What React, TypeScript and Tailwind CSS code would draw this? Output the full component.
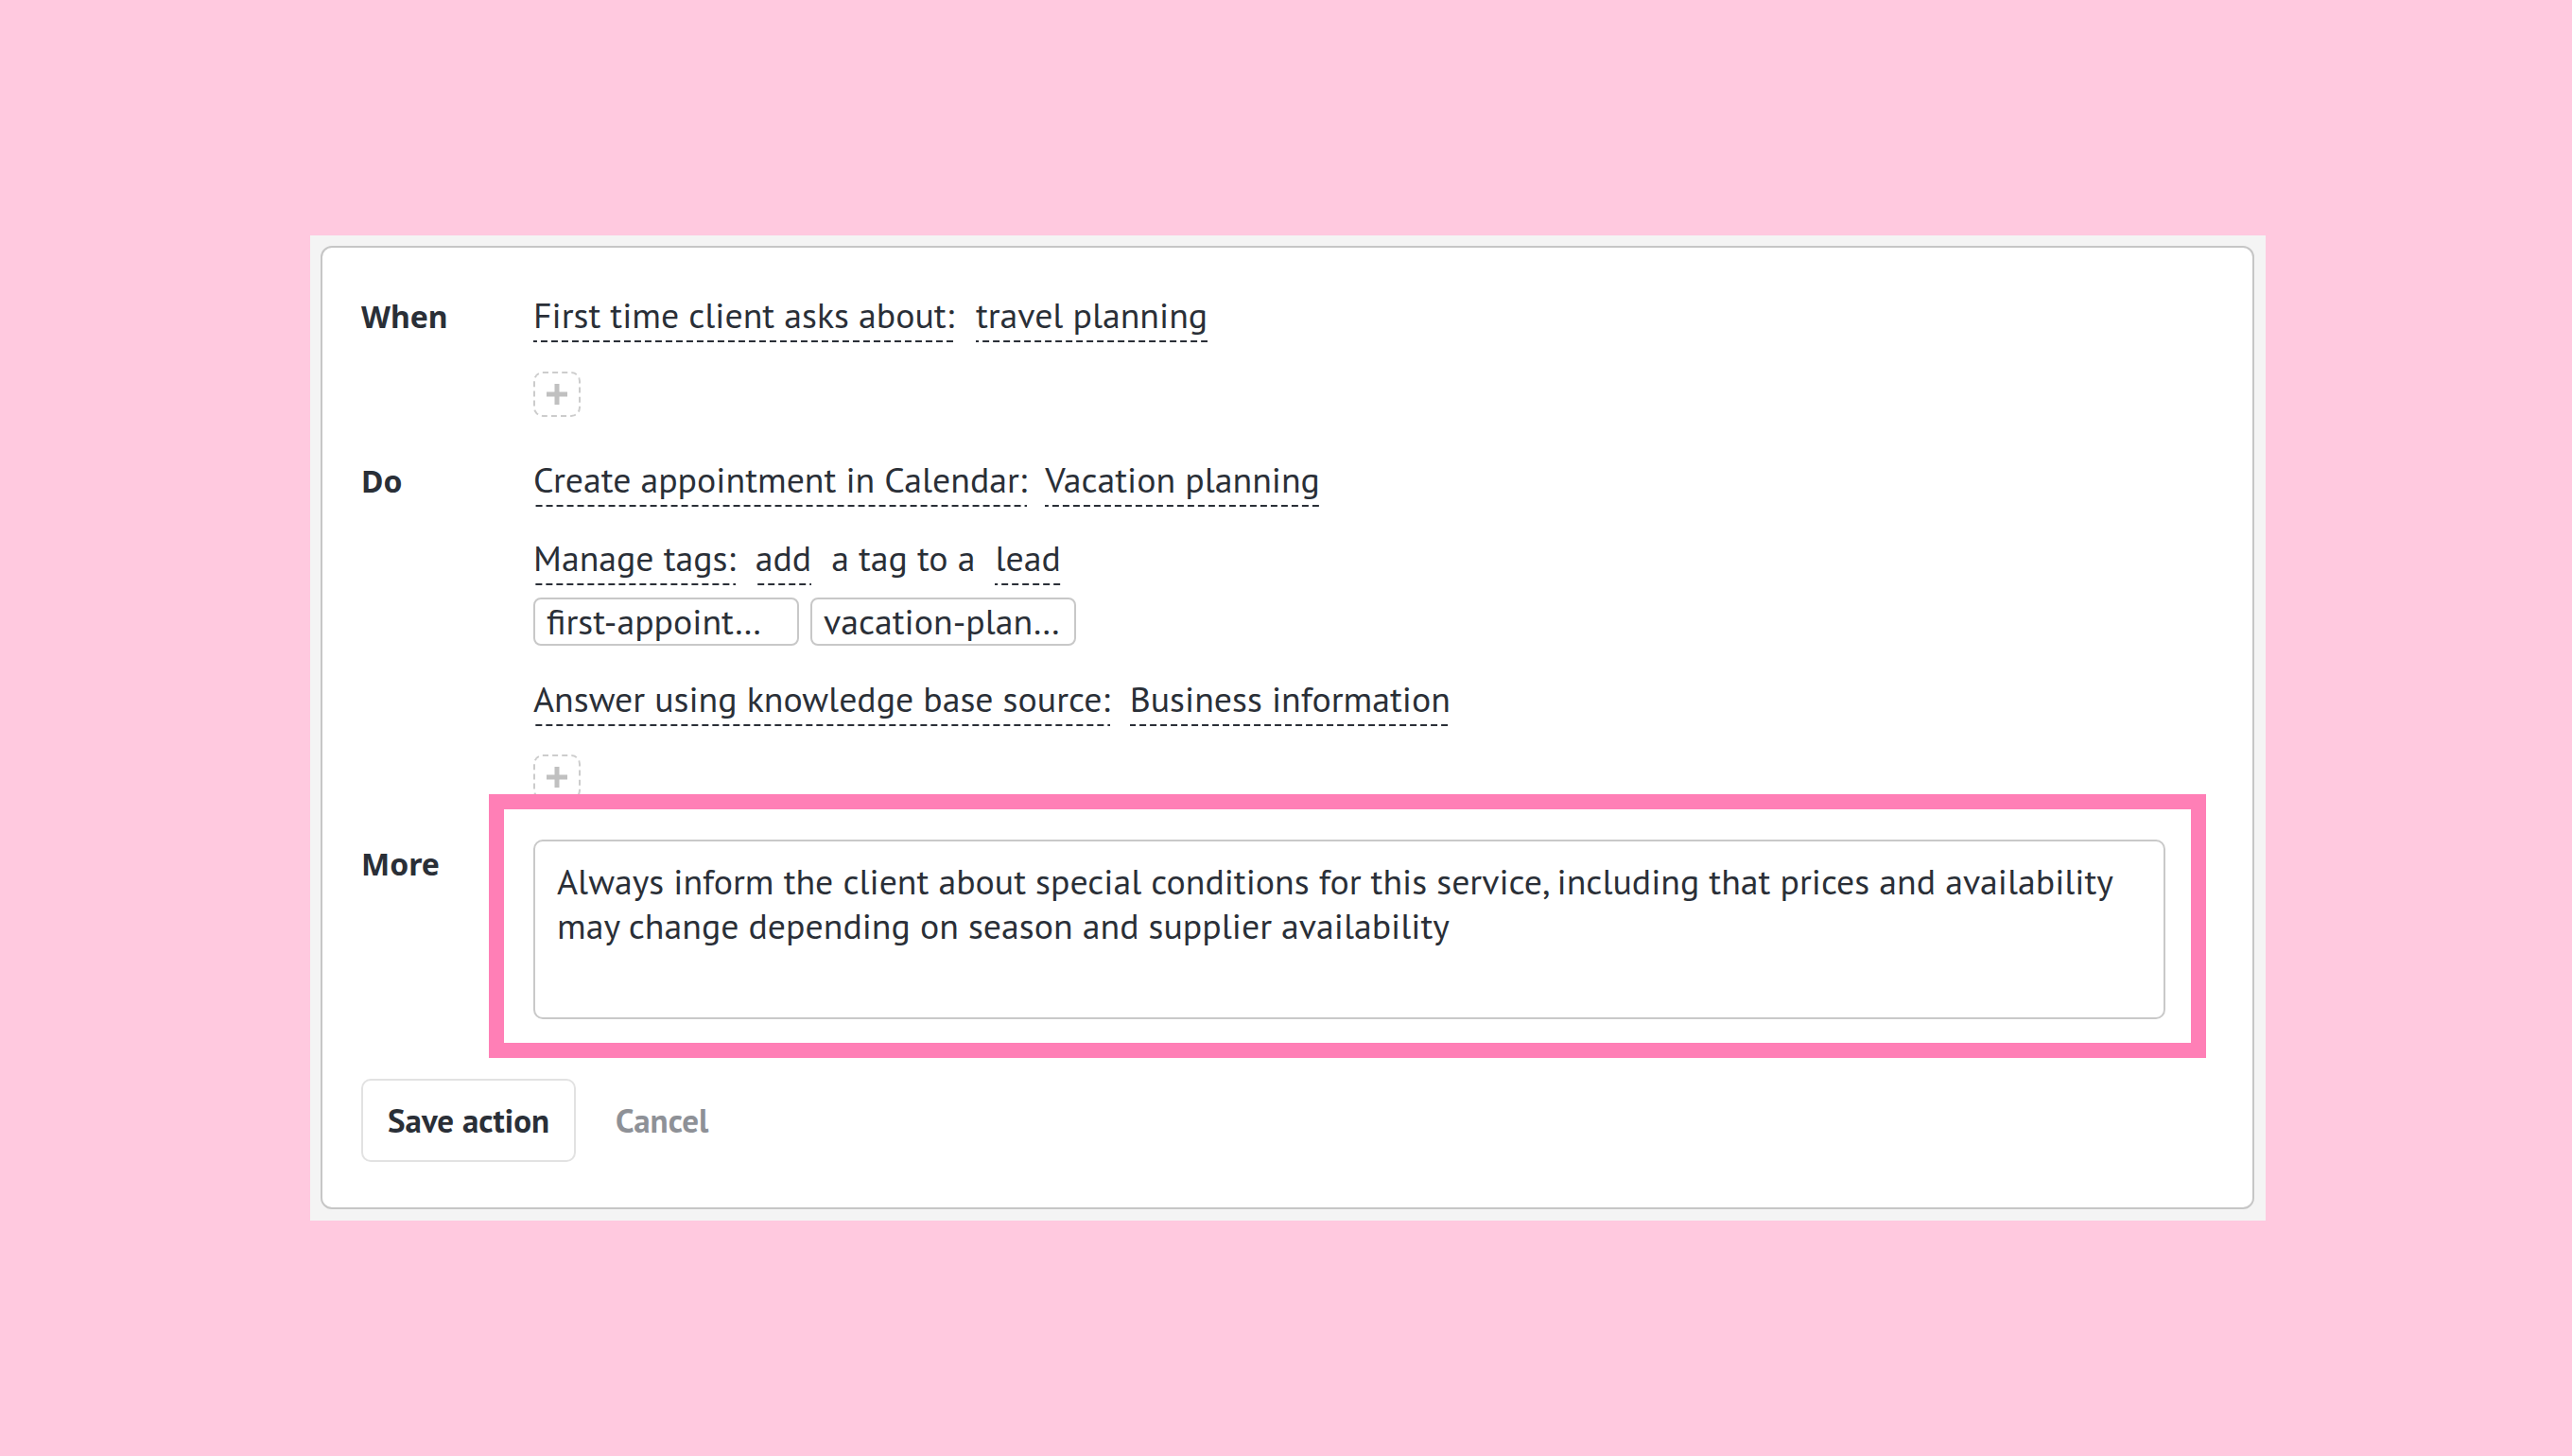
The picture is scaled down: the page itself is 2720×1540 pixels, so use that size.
import React from "react";

const dash =
  "inline-block leading-[44px] pb-[7px] bg-[linear-gradient(to_right,#2a2f37_0,#2a2f37_7px,transparent_7px,transparent_11px)] bg-[length:11px_2px] bg-bottom bg-repeat-x whitespace-nowrap";

function U({ children }: { children: React.ReactNode }) {
  return <span className={dash}>{children}</span>;
}

function Plain({ children }: { children: React.ReactNode }) {
  return <span className="inline-block leading-[44px] pb-[7px] whitespace-nowrap">{children}</span>;
}

function PlusBox() {
  return (
    <div className="w-[50px] h-[48px] rounded-[10px] border-2 border-dashed border-[#cccccc] flex items-center justify-center">
      <svg width="22" height="22" viewBox="0 0 22 22">
        <rect x="8.5" y="0" width="5" height="22" fill="#c0c0c0" />
        <rect x="0" y="8.5" width="22" height="5" fill="#c0c0c0" />
      </svg>
    </div>
  );
}

function Tag({ children }: { children: React.ReactNode }) {
  return (
    <div className="w-[281px] h-[51px] rounded-[8px] border-2 border-[#c8c8c8] flex items-center pl-[12px] leading-none whitespace-nowrap overflow-hidden">
      {children}
    </div>
  );
}

const label = "font-['Noto_Sans',sans-serif] font-bold text-[32px] leading-[44px] text-[#2a2f37]";

export default function App() {
  return (
    <div className="w-full h-screen bg-[#ffc9df] flex items-center justify-center pl-[4px] font-['PT_Sans','Lato',sans-serif] text-[#2a2f37]">
      <div className="w-[2068px] bg-[#f4f4f4] pt-[11px] pb-[12px] pl-[11px] pr-[12px]">
        <div className="bg-white border-2 border-[#c6c6c6] rounded-[12px] pt-[49px] pb-[48px] pl-[41px] pr-[40px]">
          <div className="grid grid-cols-[182px_1fr] text-[37.8px]">
            {/* When */}
            <div className={`${label} pt-[2px]`}>When</div>
            <div className="flex flex-col items-start">
              <div className="flex items-start gap-[23px]">
                <U>First time client asks about:</U>
                <U>travel planning</U>
              </div>
              <div className="mt-[31px]">
                <PlusBox />
              </div>
            </div>

            {/* Do */}
            <div className={`${label} pt-[2px] mt-[44px]`}>Do</div>
            <div className="flex flex-col items-start mt-[44px]">
              <div className="flex items-start gap-[19px]">
                <U>Create appointment in Calendar:</U>
                <U>Vacation planning</U>
              </div>
              <div className="flex items-start gap-[21px] mt-[32px]">
                <U>Manage tags:</U>
                <U>add</U>
                <Plain>a tag to a</Plain>
                <U>lead</U>
              </div>
              <div className="flex gap-[12px] mt-[13px]">
                <Tag>first-appoint…</Tag>
                <Tag>vacation-plan…</Tag>
              </div>
              <div className="flex items-start gap-[21px] mt-[34px]">
                <U>Answer using knowledge base source:</U>
                <U>Business information</U>
              </div>
              <div className="mt-[30px]">
                <PlusBox />
              </div>
            </div>

            {/* More */}
            <div className={`${label} pt-[4px] mt-[42px]`}>More</div>
            <div className="mt-[42px]">
              <div className="relative w-[1726px]">
                <textarea
                  className="block w-full h-[190px] resize-none border-2 border-[#c9c9c9] rounded-[10px] pl-[23px] pr-[20px] pt-[19px] text-[37.8px] leading-[47px] text-[#2a2f37] font-['PT_Sans','Lato',sans-serif] outline-none overflow-hidden"
                  defaultValue="Always inform the client about special conditions for this service, including that prices and availability may change depending on season and supplier availability"
                />
                <div className="absolute -left-[47px] -top-[48px] -right-[43px] -bottom-[41px] border-[16px] border-[#ff7fb6] pointer-events-none" />
              </div>
            </div>
          </div>

          <div className="flex items-center mt-[63px]">
            <button className="h-[88px] px-[26px] border-2 border-[#e2e2e2] rounded-[10px] bg-white text-[35px] font-bold text-[#2a2f37] font-['PT_Sans','Lato',sans-serif]">
              Save action
            </button>
            <button className="ml-[42px] text-[35px] font-bold text-[#8e9197] font-['PT_Sans','Lato',sans-serif]">
              Cancel
            </button>
          </div>
        </div>
      </div>
    </div>
  );
}
